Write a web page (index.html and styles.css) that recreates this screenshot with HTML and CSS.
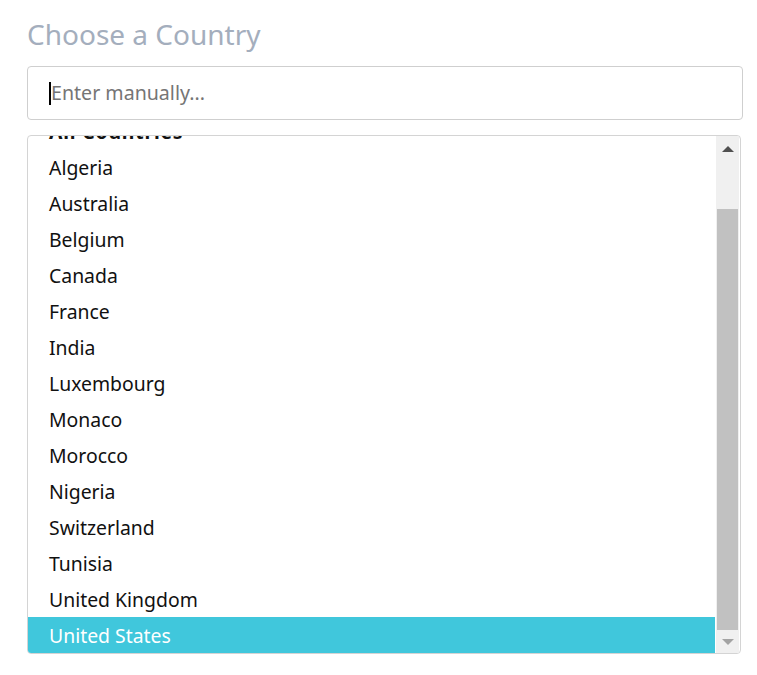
FILE: index.html
```html
<!DOCTYPE html>
<html>
<head>
<meta charset="utf-8">
<link rel="stylesheet" href="styles.css">
</head>
<body>
<div class="page">
  <h1 class="title">Choose a Country</h1>
  <div class="field"><span class="caret"></span><span class="placeholder">Enter manually...</span></div>
  <div class="listbox">
    <div class="options">
      <div class="list">
        <div class="opt group">All Countries</div>
        <div class="opt">Algeria</div>
        <div class="opt">Australia</div>
        <div class="opt">Belgium</div>
        <div class="opt">Canada</div>
        <div class="opt">France</div>
        <div class="opt">India</div>
        <div class="opt">Luxembourg</div>
        <div class="opt">Monaco</div>
        <div class="opt">Morocco</div>
        <div class="opt">Nigeria</div>
        <div class="opt">Switzerland</div>
        <div class="opt">Tunisia</div>
        <div class="opt">United Kingdom</div>
        <div class="opt selected">United States</div>
      </div>
    </div>
    <div class="scrollbar">
      <div class="btn up"><span class="tri-up"></span></div>
      <div class="track"><div class="thumb"></div></div>
      <div class="btn down"><span class="tri-down"></span></div>
    </div>
  </div>
</div>
</body>
</html>
```
FILE: styles.css
```css
html, body { margin: 0; padding: 0; background: #fff; }
body { font-family: "Noto Sans", "Open Sans", sans-serif; }
.page { padding: 14px 14px 0 27px; width: 716px; }
.title {
  margin: 0;
  font-weight: 400;
  font-size: 28px;
  line-height: 40px;
  color: #a4aebd;
  height: 52px;
}
.field {
  box-sizing: border-box;
  height: 54px;
  border: 1px solid #cfcfcf;
  border-radius: 4px;
  display: flex;
  align-items: center;
  padding-left: 21px;
  margin-bottom: 15px;
}
.caret { width: 2px; height: 23px; background: #000; }
.placeholder { font-size: 19.6px; color: #757575; margin-top: -1px; }
.listbox {
  box-sizing: border-box;
  width: 714px;
  height: 519px;
  border: 1px solid #d4d4d4;
  border-radius: 4px;
  display: flex;
  overflow: hidden;
}
.options { flex: 1; overflow: hidden; }
.list { margin-top: -23px; }
.opt {
  height: 36px;
  line-height: 37px;
  padding-left: 21px;
  font-size: 19.4px;
  color: #111;
}
.opt.group { font-weight: 700; letter-spacing: 0.8px; }
.opt.selected { background: #40c7dc; color: #fff; }
.scrollbar {
  width: 23px;
  display: flex;
  flex-direction: column;
  background: #f0f0f0;
  margin-left: 1px;
  margin-right: 1px;
}
.btn { display: flex; align-items: center; justify-content: center; }
.btn.up { height: 26px; }
.btn.down { height: 23px; }
.track { flex: 1; display: flex; flex-direction: column; }
.thumb { margin-top: 47px; flex: 1; background: #c1c1c1; margin-left: 1px; margin-right: 1px; }
.tri-up { width: 0; height: 0; border-left: 6px solid transparent; border-right: 6px solid transparent; border-bottom: 6px solid #505050; }
.tri-down { width: 0; height: 0; border-left: 6px solid transparent; border-right: 6px solid transparent; border-top: 6px solid #a3a3a3; }
```
